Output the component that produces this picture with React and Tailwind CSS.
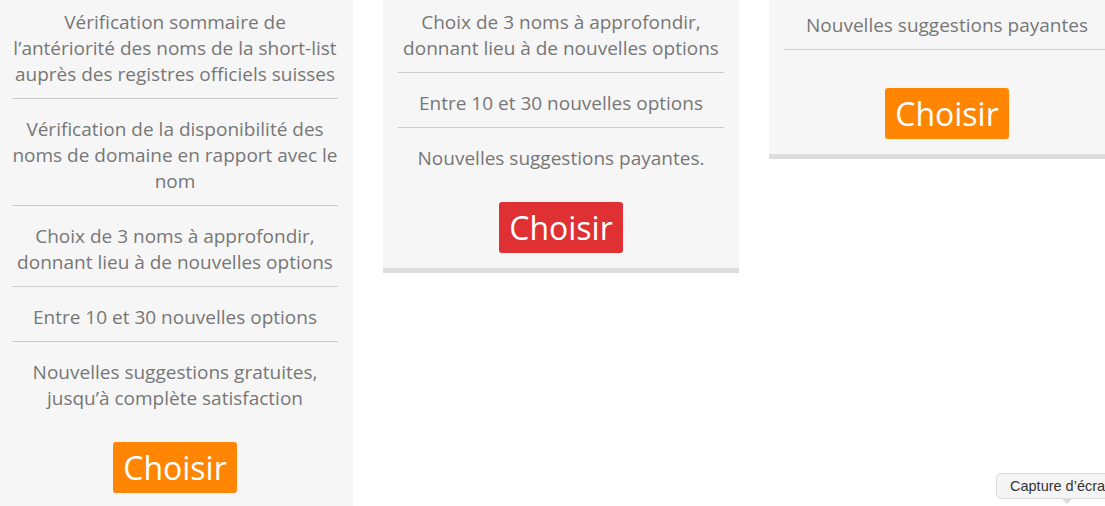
import React from "react";

const columns = [
  {
    offset: "mt-[-8px]",
    items: [
      "Vérification sommaire de l’antériorité des noms de la short-list auprès des registres officiels suisses",
      "Vérification de la disponibilité des noms de domaine en rapport avec le nom",
      "Choix de 3 noms à approfondir, donnant lieu à de nouvelles options",
      "Entre 10 et 30 nouvelles options",
      "Nouvelles suggestions gratuites, jusqu’à complète satisfaction",
    ],
    lastBorder: false,
    btnGap: "mt-[20px]",
    btn: "bg-[#ff8502]",
  },
  {
    offset: "mt-[-8px]",
    items: [
      "Choix de 3 noms à approfondir, donnant lieu à de nouvelles options",
      "Entre 10 et 30 nouvelles options",
      "Nouvelles suggestions payantes.",
    ],
    lastBorder: false,
    btnGap: "mt-[20px]",
    btn: "bg-[#df3034]",
  },
  {
    offset: "mt-[-5px]",
    items: ["Nouvelles suggestions payantes"],
    lastBorder: true,
    btnGap: "mt-[38px]",
    btn: "bg-[#ff8502]",
  },
];

const PlanColumn = ({ col }) => (
  <div className={`w-[356px] shrink-0 self-start bg-[#f6f6f6] px-[15px] pb-[15px] border-b-[5px] border-[#dddddd] ${col.offset}`}>
    <ul>
      {col.items.map((text, i) => {
        const last = i === col.items.length - 1;
        return (
          <li
            key={i}
            className={`pt-[17px] pb-[11px] text-center text-[19px] leading-[26px] text-[#777777] ${
              last && !col.lastBorder ? "" : "border-b border-[#cccccc]"
            }`}
          >
            {text}
          </li>
        );
      })}
    </ul>
    <div className={`flex justify-center ${col.btnGap}`}>
      <button className={`h-[51px] px-[10px] rounded-[3px] text-white text-[32px] leading-[51px] ${col.btn}`}>
        Choisir
      </button>
    </div>
  </div>
);

export default function App() {
  return (
    <div className="relative w-[1105px] h-[506px] overflow-hidden bg-white font-['Open_Sans',sans-serif]">
      <div className="flex gap-[30px] ml-[-3px]">
        {columns.map((col, i) => (
          <PlanColumn key={i} col={col} />
        ))}
      </div>

      {/* screenshot tooltip, cut by the window edge */}
      <div className="absolute left-[996px] top-[473px]">
        <div className="relative h-[26px] w-[150px] rounded-[5px] border border-[#dadada] bg-[#f5f5f5] pl-[13px] text-[14.5px] leading-[24px] text-[#333333] whitespace-nowrap font-['Liberation_Sans',sans-serif]">
          Capture d’écran
          <span className="absolute left-[64px] top-[24px] h-0 w-0 border-x-[6px] border-t-[6px] border-x-transparent border-t-[#dadada]"></span>
        </div>
      </div>
    </div>
  );
}
